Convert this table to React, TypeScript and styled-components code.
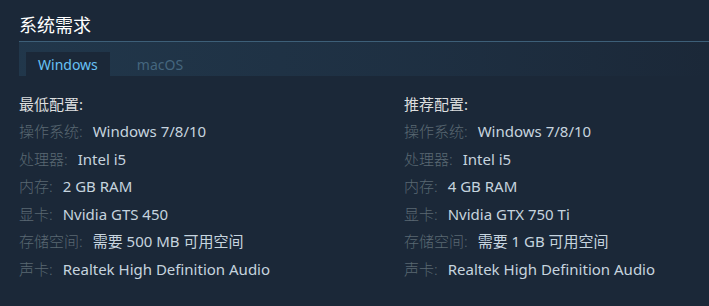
import React, { useState } from "react";
import styled, { createGlobalStyle } from "styled-components";

const GlobalStyles = createGlobalStyle`
  html, body {
    margin: 0;
    padding: 0;
    background: #1b2838;
  }
  body {
    font-family: "Noto Sans", "Noto Sans CJK SC", sans-serif;
    width: 709px;
    height: 306px;
    overflow: hidden;
  }
`;

const Section = styled.section`
  padding: 12px 0 0 19px;
`;

const Title = styled.h2`
  margin: 0;
  font-size: 18px;
  font-weight: 400;
  line-height: 26px;
  color: #ffffff;
`;

const TabBar = styled.div`
  margin-top: 3px;
  height: 35px;
  padding: 10px 0 0 7px;
  box-sizing: border-box;
  display: flex;
  gap: 15px;
  border-top: 1px solid #3d5f78;
  background: linear-gradient(to right, rgba(38, 67, 90, 0.55) 0%, rgba(34, 58, 80, 0.4) 60%, rgba(27, 40, 56, 0.2) 100%);
`;

const Tab = styled.div<{ $active: boolean }>`
  height: 24px;
  padding: 0 12px;
  display: flex;
  align-items: center;
  font-size: 14px;
  cursor: pointer;
  color: ${(p) => (p.$active ? "#67c1f5" : "#45667e")};
  background: ${(p) => (p.$active ? "#1b2838" : "transparent")};
`;

const Columns = styled.div`
  display: grid;
  grid-template-columns: 385px 1fr;
  margin-top: 15px;
`;

const Column = styled.div`
  display: flex;
  flex-direction: column;
`;

const Heading = styled.div`
  font-size: 15px;
  line-height: 27px;
  color: #dcdedf;
`;

const Row = styled.div`
  font-size: 15px;
  line-height: 27.6px;
  color: #c6d4df;
  white-space: nowrap;
`;

const Label = styled.span`
  color: #5a6873;
  font-weight: 300;
  margin-right: 10px;
`;

type Spec = [string, string];

const minimum: Spec[] = [
  ["操作系统:", "Windows 7/8/10"],
  ["处理器:", "Intel i5"],
  ["内存:", "2 GB RAM"],
  ["显卡:", "Nvidia GTS 450"],
  ["存储空间:", "需要 500 MB 可用空间"],
  ["声卡:", "Realtek High Definition Audio"],
];

const recommended: Spec[] = [
  ["操作系统:", "Windows 7/8/10"],
  ["处理器:", "Intel i5"],
  ["内存:", "4 GB RAM"],
  ["显卡:", "Nvidia GTX 750 Ti"],
  ["存储空间:", "需要 1 GB 可用空间"],
  ["声卡:", "Realtek High Definition Audio"],
];

function SpecList({ title, specs }: { title: string; specs: Spec[] }) {
  return (
    <Column>
      <Heading>{title}</Heading>
      {specs.map(([label, value]) => (
        <Row key={label}>
          <Label>{label}</Label>
          {value}
        </Row>
      ))}
    </Column>
  );
}

export default function App() {
  const [os, setOs] = useState("win");
  return (
    <>
      <GlobalStyles />
      <Section>
        <Title>系统需求</Title>
        <TabBar>
          <Tab $active={os === "win"} onClick={() => setOs("win")}>Windows</Tab>
          <Tab $active={os === "mac"} onClick={() => setOs("mac")}>macOS</Tab>
        </TabBar>
        <Columns>
          <SpecList title="最低配置:" specs={minimum} />
          <SpecList title="推荐配置:" specs={recommended} />
        </Columns>
      </Section>
    </>
  );
}
